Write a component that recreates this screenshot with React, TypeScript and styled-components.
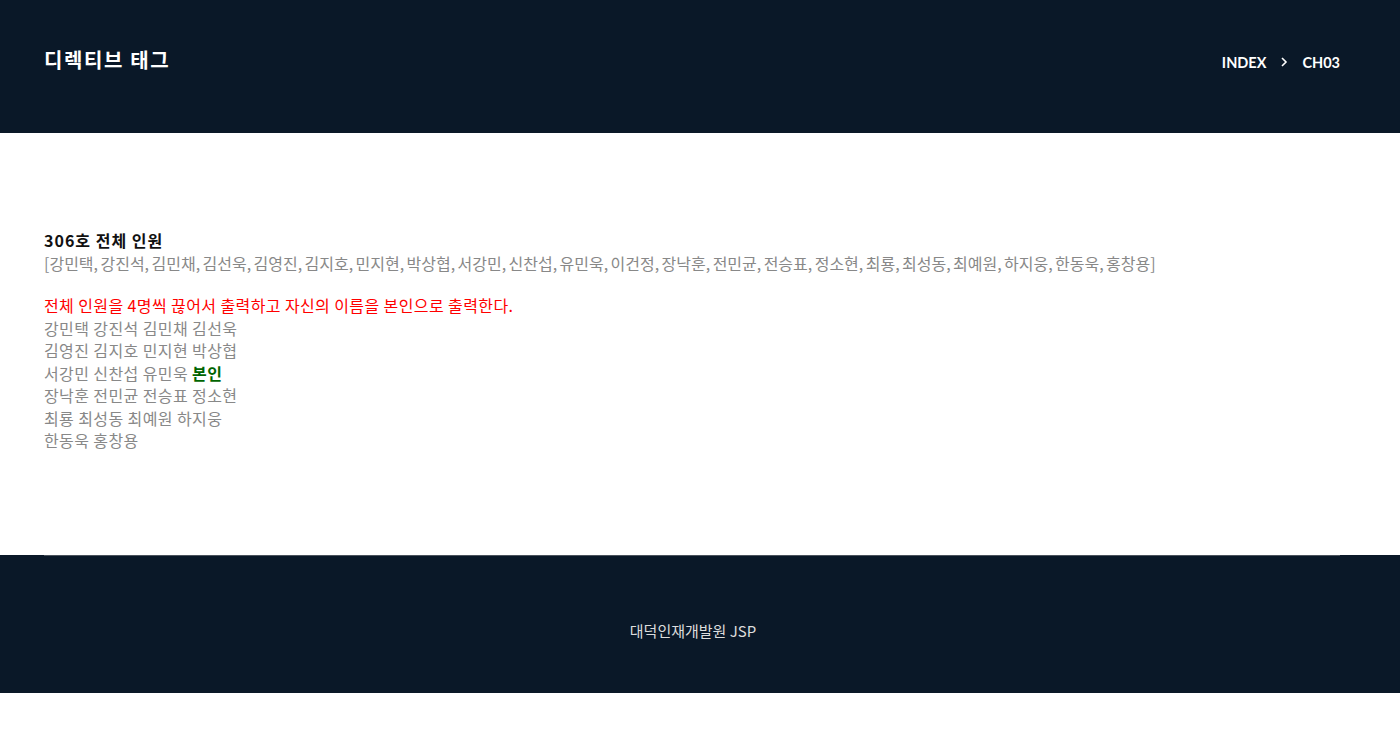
import * as React from 'react';
import styled, { createGlobalStyle } from 'styled-components';

const GlobalStyle = createGlobalStyle`
    html, body {
        margin: 0;
        padding: 0;
        background: #ffffff;
        font-family: "Noto Sans CJK KR", "Noto Sans", sans-serif;
    }
`;

const Header = styled.header`
    height: 133px;
    background-color: #0a1828;
    display: flex;
    align-items: center;
    justify-content: space-between;
    padding: 0 60px 0 44px;
    box-sizing: border-box;
`;

const Title = styled.h1`
    margin: 0 0 14px;
    font-size: 20px;
    font-weight: 700;
    color: #ffffff;
    letter-spacing: 1.6px;
`;

const Crumbs = styled.nav`
    display: flex;
    align-items: center;
    gap: 12px;
    font-family: "Lato", "Open Sans", sans-serif;
    font-weight: 700;
    font-size: 14.5px;
    color: #ffffff;
    margin: 0 0 9px 0;
`;

const Main = styled.main`
    padding: 96px 44px 103px;
    font-size: 16px;
    line-height: 22.5px;
    letter-spacing: 0.4px;
    color: #888888;
`;

const Heading = styled.div`
    font-weight: 700;
    color: #111111;
    letter-spacing: 1px;
`;

const Line = styled.div<{ $tone?: 'red'; $tight?: boolean }>`
    color: ${(p) => (p.$tone === 'red' ? '#ff0000' : '#888888')};
    letter-spacing: ${(p) => (p.$tight ? '0' : '0.4px')};
    white-space: pre;
`;

const Sep = styled.span`
    letter-spacing: -0.6px;
`;

const Me = styled.b`
    color: #006400;
`;

const Gap = styled.div`
    height: 20px;
`;

const Footer = styled.footer`
    height: 138px;
    background-color: #0a1828;
    display: flex;
    justify-content: center;
    align-items: center;
    position: relative;
    color: #dddddd;
    font-size: 15px;
    padding: 14px 14px 0 0;
    box-sizing: border-box;
    &::before {
        content: '';
        position: absolute;
        top: 0;
        left: 44px;
        right: 60px;
        height: 1px;
        background: #4a525c;
    }
`;

const names = [
    '강민택', '강진석', '김민채', '김선욱', '김영진', '김지호', '민지현', '박상협',
    '서강민', '신찬섭', '유민욱', '이건정', '장낙훈', '전민균', '전승표', '정소현',
    '최룡', '최성동', '최예원', '하지웅', '한동욱', '홍창용',
];
const me = '이건정';

export default function App(): JSX.Element {
    const rows: string[][] = [];
    for (let i = 0; i < names.length; i += 4) rows.push(names.slice(i, i + 4));
    return (
        <>
            <GlobalStyle />
            <Header>
                <Title>디렉티브 태그</Title>
                <Crumbs>
                    <span>INDEX</span>
                    <svg width="12" height="12" viewBox="0 0 12 12">
                        <path d="M4 2 L8 6 L4 10" stroke="#fff" strokeWidth="1.6" fill="none" />
                    </svg>
                    <span>CH03</span>
                </Crumbs>
            </Header>
            <Main>
                <Heading>306호 전체 인원</Heading>
                <Line $tight>
                    [
                    {names.map((n, i) => (
                        <React.Fragment key={n}>
                            {i > 0 && <Sep>, </Sep>}
                            {n}
                        </React.Fragment>
                    ))}
                    ]
                </Line>
                <Gap />
                <Line $tone="red">전체 인원을 4명씩 끊어서 출력하고 자신의 이름을 본인으로 출력한다.</Line>
                {rows.map((r, i) => (
                    <Line key={i}>
                        {r.map((n, j) => (
                            <React.Fragment key={n}>
                                {j > 0 ? ' ' : ''}
                                {n === me ? <Me>본인</Me> : n}
                            </React.Fragment>
                        ))}
                    </Line>
                ))}
            </Main>
            <Footer>대덕인재개발원 JSP</Footer>
        </>
    );
}
